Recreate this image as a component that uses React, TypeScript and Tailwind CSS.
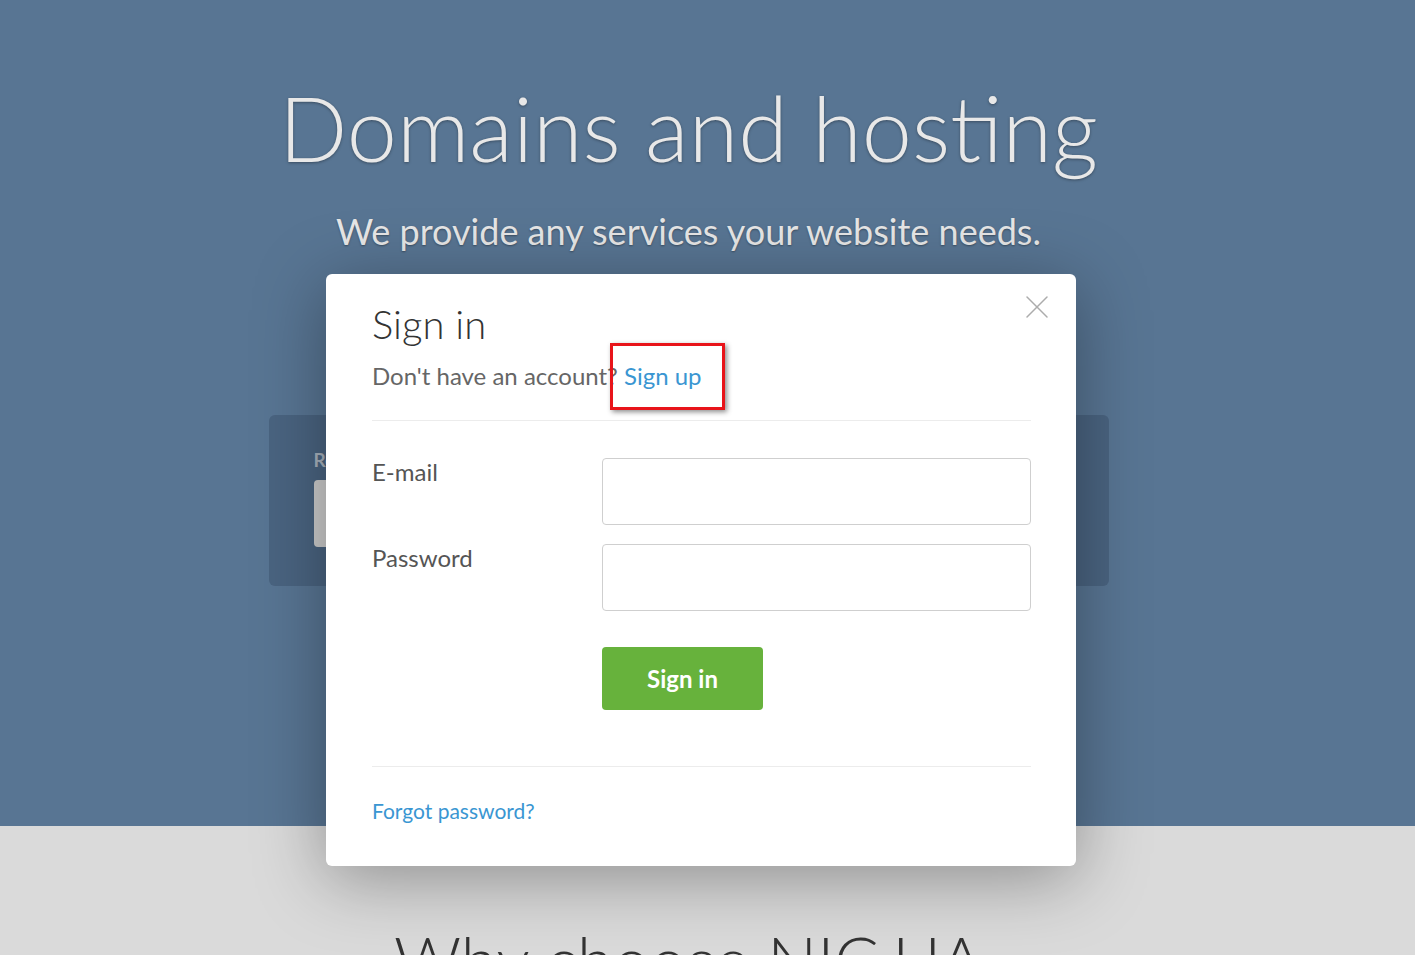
import { X } from 'lucide-react';

function Hero() {
  return (
    <section className="relative h-[826px] bg-[#587593] flex flex-col items-center pr-[38px]">
      <h1 className="mt-[82px] text-[90px] leading-none font-light text-[#e8e8e8] [text-shadow:0_1px_3px_rgba(0,0,0,0.35)]">
        Domains and hosting
      </h1>
      <p className="mt-[41px] text-[36px] leading-none text-[#e6e6e6] [text-shadow:0_1px_2px_rgba(0,0,0,0.35)]">
        We provide any services your website needs.
      </p>
      <div className="mt-[166px] w-[840px] h-[171px] rounded-md bg-[#4a6481] px-[45px] pt-[35px]">
        <div className="text-[19px] leading-none font-bold text-[#a9b3be]">Register a domain</div>
        <div className="mt-[11px] h-[67px] w-[600px] rounded bg-[#cdcdcd]" />
      </div>
    </section>
  );
}

function Features() {
  return (
    <section className="h-[400px] bg-[#dadada] flex flex-col items-center pr-[38px]">
      <h2 className="mt-[100px] text-[66px] leading-none font-light text-[#333]">Why choose NIC.UA</h2>
    </section>
  );
}

function SignInModal() {
  return (
    <div className="absolute left-[326px] top-[274px] w-[750px] rounded-md bg-white shadow-[0_12px_70px_rgba(0,0,0,0.35)] pl-[46px] pr-[45px] pt-[30px] pb-[45px]">
      <button className="absolute right-[19px] top-[13px] text-[#acacac]">
        <X size={40} strokeWidth={0.9} />
      </button>
      <h3 className="text-[40px] leading-none font-light text-[#333]">Sign in</h3>
      <p className="mt-[20px] text-[24px] leading-none text-[#666]">
        Don't have an account? <a className="text-[#3a96d2]">Sign up</a>
      </p>
      <div className="absolute left-[284px] top-[69px] w-[115px] h-[67px] border-[3px] border-[#e8141a] shadow-[2px_2px_5px_rgba(0,0,0,0.45)]" />
      <div className="mt-[32px] h-px bg-[#ececec]" />
      <div className="mt-[37px] grid grid-cols-[230px_1fr] gap-y-[19px]">
        <label className="pt-[2px] text-[24px] leading-none text-[#555]">E-mail</label>
        <input className="h-[67px] rounded border border-[#cfcfcf] outline-none" />
        <label className="pt-[2px] text-[24px] leading-none text-[#555]">Password</label>
        <input type="password" className="h-[67px] rounded border border-[#cfcfcf] outline-none" />
        <div />
        <button className="mt-[17px] w-[161px] h-[63px] rounded bg-[#67b23c] text-white text-[24px] font-bold">
          Sign in
        </button>
      </div>
      <div className="mt-[56px] h-px bg-[#ececec]" />
      <a className="block mt-[33px] text-[21px] leading-none text-[#3a96d2]">Forgot password?</a>
    </div>
  );
}

export default function App() {
  return (
    <div className="relative h-[955px] overflow-hidden font-['Lato',sans-serif]">
      <Hero />
      <Features />
      <SignInModal />
    </div>
  );
}
